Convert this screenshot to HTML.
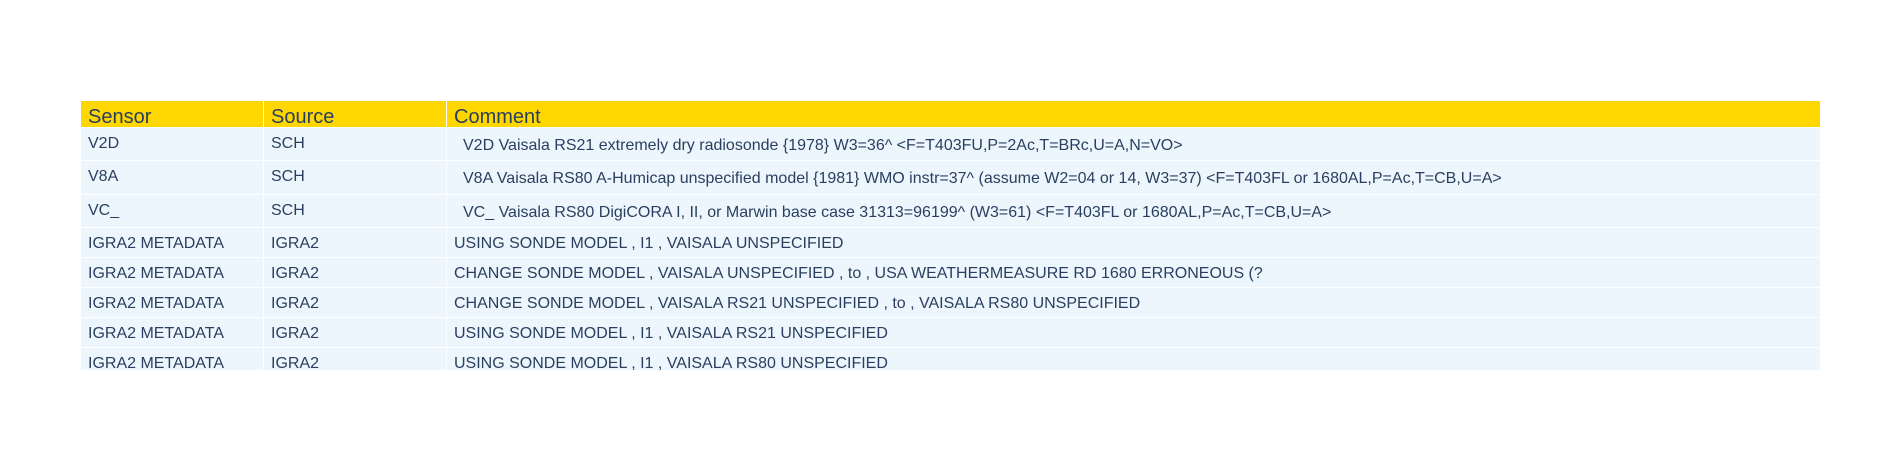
<!DOCTYPE html>
<html><head><meta charset="utf-8"><style>
body{margin:0;width:1900px;height:450px;background:#fff;font-family:"Liberation Sans",Arial,sans-serif;color:#2a3f5f;position:relative;overflow:hidden}
.r{position:absolute;left:81px;width:1739px;background:#eef6fd;border-bottom:1px solid #fff;box-sizing:border-box}
.h{background:#ffd700;font-size:20px}
.c{position:absolute;top:0;bottom:0;border-right:1px solid #fff;box-sizing:border-box;white-space:nowrap;line-height:16px;font-size:16px}
.h .c{font-size:20px;line-height:20px;padding-top:6px}
.a{left:0;width:183px;padding-left:7px}
.b{left:183px;width:183px;padding-left:7px}
.d{left:366px;right:0;padding-left:7px;border-right:none}
</style></head><body>
<div class="r h" style="top:101px;height:27px"><div class="c a">Sensor</div><div class="c b">Source</div><div class="c d">Comment</div></div>
<div class="r" style="top:128px;height:33px"><div class="c a" style="padding-top:8px">V2D</div><div class="c b" style="padding-top:8px">SCH</div><div class="c d" style="padding-top:10px;padding-left:16px">V2D Vaisala RS21 extremely dry radiosonde {1978} W3=36^ &lt;F=T403FU,P=2Ac,T=BRc,U=A,N=VO&gt;</div></div>
<div class="r" style="top:161px;height:34px"><div class="c a" style="padding-top:8px">V8A</div><div class="c b" style="padding-top:8px">SCH</div><div class="c d" style="padding-top:10px;padding-left:16px">V8A Vaisala RS80 A-Humicap unspecified model {1981} WMO instr=37^ (assume W2=04 or 14, W3=37) &lt;F=T403FL or 1680AL,P=Ac,T=CB,U=A&gt;</div></div>
<div class="r" style="top:195px;height:33px"><div class="c a" style="padding-top:8px">VC_</div><div class="c b" style="padding-top:8px">SCH</div><div class="c d" style="padding-top:10px;padding-left:16px">VC_ Vaisala RS80 DigiCORA I, II, or Marwin base case 31313=96199^ (W3=61) &lt;F=T403FL or 1680AL,P=Ac,T=CB,U=A&gt;</div></div>
<div class="r" style="top:228px;height:30px"><div class="c a" style="padding-top:8px">IGRA2 METADATA</div><div class="c b" style="padding-top:8px">IGRA2</div><div class="c d" style="padding-top:8px">USING SONDE MODEL , I1 , VAISALA UNSPECIFIED</div></div>
<div class="r" style="top:258px;height:30px"><div class="c a" style="padding-top:8px">IGRA2 METADATA</div><div class="c b" style="padding-top:8px">IGRA2</div><div class="c d" style="padding-top:8px">CHANGE SONDE MODEL , VAISALA UNSPECIFIED , to , USA WEATHERMEASURE RD 1680 ERRONEOUS (?</div></div>
<div class="r" style="top:288px;height:30px"><div class="c a" style="padding-top:8px">IGRA2 METADATA</div><div class="c b" style="padding-top:8px">IGRA2</div><div class="c d" style="padding-top:8px">CHANGE SONDE MODEL , VAISALA RS21 UNSPECIFIED , to , VAISALA RS80 UNSPECIFIED</div></div>
<div class="r" style="top:318px;height:30px"><div class="c a" style="padding-top:8px">IGRA2 METADATA</div><div class="c b" style="padding-top:8px">IGRA2</div><div class="c d" style="padding-top:8px">USING SONDE MODEL , I1 , VAISALA RS21 UNSPECIFIED</div></div>
<div class="r" style="top:348px;height:22px;overflow:hidden;border-bottom:none"><div class="c a" style="padding-top:8px">IGRA2 METADATA</div><div class="c b" style="padding-top:8px">IGRA2</div><div class="c d" style="padding-top:8px">USING SONDE MODEL , I1 , VAISALA RS80 UNSPECIFIED</div></div>
</body></html>
